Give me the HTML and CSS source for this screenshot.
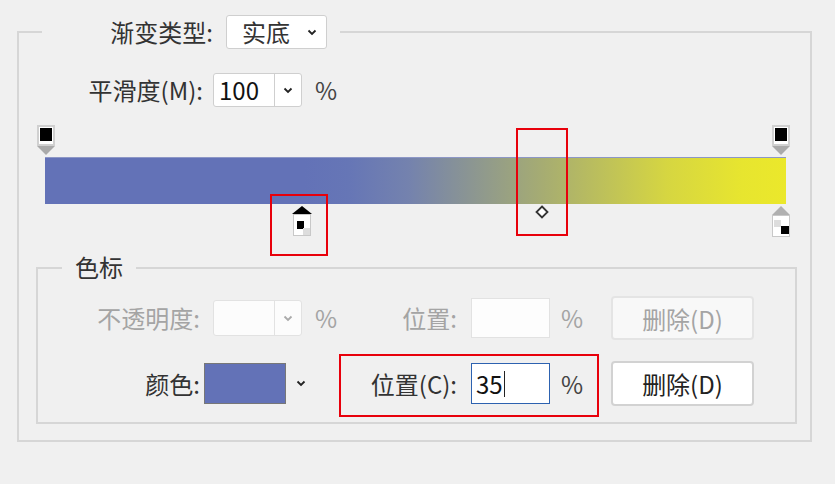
FILE: index.html
```html
<!DOCTYPE html>
<html lang="zh-CN">
<head>
    <meta charset="UTF-8">
    <meta name="viewport" content="width=device-width, initial-scale=1.0">
    <title>渐变编辑器</title>
    <link rel="stylesheet" href="styles.css">
</head>
<body>
    <div class="dialog">
        <!-- 바깥 그룹 : 渐变类型 -->
        <div class="group outer">
            <div class="group-title outer-title">
                <span class="label title-label">渐变类型:</span>
                <div class="select">
                    <span class="select-val">实底</span>
                    <svg class="chev" width="10" height="7" viewBox="0 0 10 7"><polyline points="1.5,1.5 5,5 8.5,1.5"/></svg>
                </div>
            </div>

            <div class="smooth-row">
                <span class="label smooth-label">平滑度(M):</span>
                <div class="combo">
                    <span class="combo-val">100</span>
                    <span class="combo-btn">
                        <svg class="chev" width="10" height="7" viewBox="0 0 10 7"><polyline points="1.5,1.5 5,5 8.5,1.5"/></svg>
                    </span>
                </div>
                <span class="unit">%</span>
            </div>

            <!-- 그라디언트 바 + 색标 -->
            <div class="editor">
                <div class="stop stop-top" style="left:0px;">
                    <span class="stop-box"><i class="sq-black"></i></span>
                    <span class="tri-down"></span>
                </div>
                <div class="stop stop-top" style="left:735px;">
                    <span class="stop-box"><i class="sq-black"></i></span>
                    <span class="tri-down"></span>
                </div>

                <div class="bar"></div>

                <div class="stop stop-bot on" style="left:256px;">
                    <span class="tri-up"></span>
                    <span class="stop-box"><i class="sq-a"></i><i class="sq-b"></i></span>
                </div>
                <svg class="mid" style="left:498px;" width="14" height="14" viewBox="0 0 14 14"><polygon points="7,1.5 12.5,7 7,12.5 1.5,7"/></svg>
                <div class="stop stop-bot" style="left:735px;">
                    <span class="tri-up"></span>
                    <span class="stop-box"><i class="sq-a"></i><i class="sq-b"></i></span>
                </div>

                <div class="mark mark-stop"></div>
                <div class="mark mark-mid"></div>
            </div>

            <!-- 안쪽 그룹 : 色标 -->
            <div class="group inner">
                <div class="group-title inner-title">色标</div>

                <div class="stop-row row-off">
                    <span class="label cell-l1">不透明度:</span>
                    <div class="combo combo-off">
                        <span class="combo-val"></span>
                        <span class="combo-btn">
                            <svg class="chev" width="10" height="7" viewBox="0 0 10 7"><polyline points="1.5,1.5 5,5 8.5,1.5"/></svg>
                        </span>
                    </div>
                    <span class="unit cell-u1">%</span>
                    <span class="label cell-l2">位置:</span>
                    <div class="field field-off"></div>
                    <span class="unit cell-u2">%</span>
                    <button class="btn" disabled>删除(D)</button>
                </div>

                <div class="stop-row row-on">
                    <span class="label cell-l1">颜色:</span>
                    <div class="swatch-wrap">
                        <span class="swatch"></span>
                        <svg class="chev" width="10" height="7" viewBox="0 0 10 7"><polyline points="1.5,1.5 5,5 8.5,1.5"/></svg>
                    </div>
                    <span class="unit cell-u1"></span>
                    <span class="label cell-l2">位置(C):</span>
                    <div class="field field-on">35<span class="caret"></span></div>
                    <span class="unit cell-u2">%</span>
                    <button class="btn">删除(D)</button>
                    <div class="mark mark-pos"></div>
                </div>
            </div>
        </div>
    </div>
</body>
</html>
```

FILE: styles.css
```css
*{ margin: 0; padding: 0; box-sizing: border-box;}
body{ background-color: #f0f0f0; font-family: "Noto Sans CJK SC", "Noto Sans", sans-serif; color: #333; width: 835px; height: 484px; overflow: hidden;}

.dialog{ padding: 31px 0 0 17px;}

/* 그룹 박스 */
.group{ border: 2px solid #d6d6d6;}
.group-title{ background-color: #f0f0f0; display: flex; align-items: center;}
.label{ font-size: 24px; white-space: nowrap; line-height: 30px;}
.unit{ font-size: 24px; line-height: 30px; color: #444;}

.outer{ width: 795px; height: 411px;}
.outer-title{ width: 298px; height: 34px; margin: -18px 0 0 23px; padding-right: 13px;}
.title-label{ width: 171px; text-align: right; margin-right: 13px;}

.chev{ fill: none; stroke: #222; stroke-width: 1.8;}

.select{ width: 101px; height: 34px; background-color: #fff; border: 1px solid #cfcfcf; border-radius: 3px; display: flex; align-items: center; padding: 0 9px 0 15px;}
.select-val{ font-size: 24px; line-height: 30px; flex: 1;}

/* 平滑度 */
.smooth-row{ display: flex; align-items: center; margin-top: 24px; height: 34px;}
.smooth-label{ width: 184px; text-align: right; margin-right: 10px;}
.combo{ width: 89px; height: 34px; display: flex; background-color: #fff; border: 1px solid #cfcfcf; border-radius: 3px;}
.combo-val{ width: 61px; font-size: 24px; line-height: 32px; padding-left: 5px; color: #111; border-right: 1px solid #cfcfcf;}
.combo-btn{ flex: 1; display: flex; align-items: center; justify-content: center;}
.smooth-row .unit{ margin-left: 13px;}

/* 그라디언트 편집 영역 */
.editor{ position: relative; width: 753px; height: 112px; margin: 18px 0 0 18px;}
.bar{ position: absolute; left: 8px; top: 32px; width: 741px; height: 47px;
    background: linear-gradient(to right, #6372b7 35%, #6676b6 41%, #7482ae 49%, #a7ad71 67.5%, #d6d641 84%, #e7e52f 94%, #ebe82b 100%);
    border-top: 1px solid #8d97c6;}

.stop{ position: absolute; width: 18px; display: flex; flex-direction: column; align-items: center;}
.stop-top{ top: 0;}
.stop-bot{ top: 81px;}
.stop-box{ position: relative; display: block; width: 18px; height: 21px; background-color: #fff; border: 1px solid #c8c8c8;}
.stop-top .stop-box{ border: 2px solid #d0d0d0;}
.sq-black{ position: absolute; left: 1px; top: 1px; width: 12px; height: 13px; background-color: #000;}
.tri-down{ width: 0; height: 0; border-left: 9px solid transparent; border-right: 9px solid transparent; border-top: 9px solid #aaa;}
.tri-up{ width: 0; height: 0; border-left: 9px solid transparent; border-right: 9px solid transparent; border-bottom: 9px solid #b0b0b0;}
.stop-bot .stop-box{ height: 22px;}
.sq-a{ position: absolute; left: 1px; top: 4px; width: 7px; height: 7px; background-color: #ddd;}
.sq-b{ position: absolute; left: 8px; top: 10px; width: 8px; height: 8px; background-color: #000;}
.stop-bot.on .tri-up{ border-bottom-color: #000; border-bottom-width: 8px; border-left-width: 10px; border-right-width: 10px;}
.stop-bot.on .sq-a{ left: 3px; top: 6px; width: 7px; height: 8px; background-color: #000;}
.stop-bot.on .sq-b{ left: 9px; top: 13px; width: 7px; height: 7px; background-color: #ddd;}
.mid{ position: absolute; top: 80px; fill: #fff; stroke: #333; stroke-width: 1.8;}

/* 빨간 표시 상자 */
.mark{ position: absolute; border: 2px solid #e8000b;}
.mark-stop{ left: 233px; top: 69px; width: 58px; height: 62px;}
.mark-mid{ left: 479px; top: 3px; width: 52px; height: 108px;}
.mark-pos{ left: 301px; top: -7px; width: 260px; height: 63px;}

/* 색标 그룹 */
.inner{ width: 761px; height: 157px; margin: 30px 0 0 17px;}
.inner-title{ width: fit-content; height: 30px; margin: -17px 0 0 24px; padding: 0 13px; font-size: 24px; line-height: 30px;}

.stop-row{ position: relative; display: grid; grid-template-columns: 175px 89px 33px 136px 79px 61px 143px; align-items: center;}
.row-off{ margin-top: 14px; height: 44px;}
.row-on{ margin-top: 21px; height: 45px;}
.cell-l1{ text-align: right; padding-right: 13px;}
.cell-u1{ padding-left: 13px;}
.cell-l2{ text-align: right; padding-right: 14px;}
.cell-u2{ padding-left: 11px;}

.row-off .label, .row-off .unit{ color: #a4a4a4;}
.combo-off{ height: 36px; border-color: #e2e2e2; background-color: #fcfcfc;}
.combo-off .combo-val{ border-right-color: #e2e2e2;}
.combo-off .chev{ stroke: #aaa;}

.field{ height: 40px; background-color: #fff; font-size: 24px; line-height: 36px; padding-left: 4px; color: #111;}
.field-off{ border: 1px solid #e2e2e2; background-color: #fdfdfd;}
.field-on{ height: 41px; border: 1px solid #2d62b0; display: flex; align-items: center;}
.caret{ display: inline-block; width: 1px; height: 26px; background-color: #222; margin-left: 1px;}

.swatch-wrap{ display: flex; align-items: center; margin-left: -9px; width: 112px;}
.swatch{ width: 82px; height: 41px; background-color: #6372b7; border: 1px solid #777;}
.swatch-wrap .chev{ margin-left: 10px;}

.btn{ height: 44px; font-family: inherit; font-size: 24px; color: #222; background-color: #fff; border: 2px solid #d2d2d2; border-radius: 4px;}
.btn:disabled{ color: #a4a4a4; background-color: #f8f8f8; border-color: #e4e4e4;}
.row-on .btn{ height: 45px;}
```
